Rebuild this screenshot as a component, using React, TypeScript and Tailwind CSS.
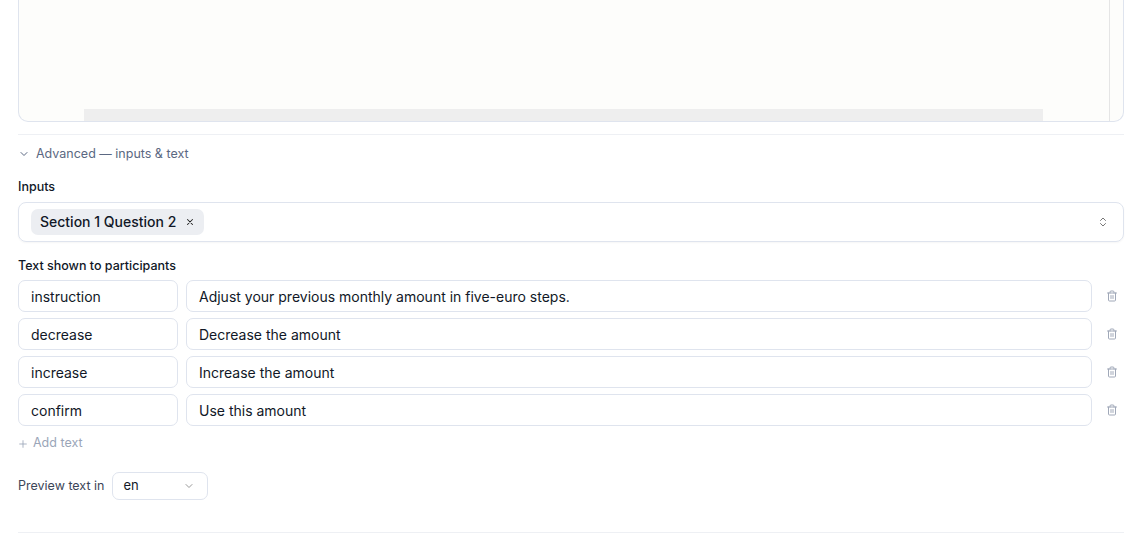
import React from "react";

const rows = [
  ["instruction", "Adjust your previous monthly amount in five-euro steps."],
  ["decrease", "Decrease the amount"],
  ["increase", "Increase the amount"],
  ["confirm", "Use this amount"],
];

function Trash() {
  return (
    <svg width="12" height="12" viewBox="0 0 24 24" fill="none" stroke="#a0a8b8" strokeWidth="2" strokeLinecap="round" strokeLinejoin="round">
      <path d="M3 6h18" />
      <path d="M19 6v14a2 2 0 0 1-2 2H7a2 2 0 0 1-2-2V6" />
      <path d="M8 6V4a2 2 0 0 1 2-2h4a2 2 0 0 1 2 2v2" />
      <path d="M10 11v6M14 11v6" />
    </svg>
  );
}

export default function App() {
  return (
    <div className="w-[1142px] h-[533px] overflow-hidden bg-white px-[18px] text-[#111827]" style={{ fontFamily: "Inter, 'Noto Sans', sans-serif" }}>
      <div className="h-[122px] border border-t-0 border-[#dfe4ee] rounded-b-[10px] bg-[#fdfdfb] relative flex">
        <div className="flex-1 flex flex-col justify-end">
          <div className="h-[12px] ml-[65px] mr-[66px] bg-[#eeeeee]" />
        </div>
        <div className="w-[14px] border-l border-[#e5e5e5]" />
      </div>
      <div className="mt-[12px] border-t border-[#eef0f4]" />
      <div className="mt-[10px] flex items-center gap-[6px] text-[12.5px] text-[#5b6882]">
        <svg width="12" height="12" viewBox="0 0 24 24" fill="none" stroke="#5b6882" strokeWidth="2" strokeLinecap="round"><path d="m6 9 6 6 6-6" /></svg>
        Advanced — inputs &amp; text
      </div>
      <div className="mt-[14px] text-[12.5px] font-medium">Inputs</div>
      <div className="mt-[5px] h-[40px] border border-[#dfe4ee] rounded-[8px] flex items-center pl-[12px] pr-[14px] shadow-[0_1px_2px_rgba(0,0,0,0.04)]">
        <div className="h-[26px] rounded-[7px] bg-[#eceef2] flex items-center px-[9px] gap-[9px] text-[14px] font-medium">
          Section 1 Question 2
          <svg width="10" height="10" viewBox="0 0 24 24" fill="none" stroke="#222" strokeWidth="2.5" strokeLinecap="round"><path d="M6 6l12 12M18 6 6 18" /></svg>
        </div>
        <div className="flex-1" />
        <svg width="12" height="14" viewBox="0 0 24 24" fill="none" stroke="#777" strokeWidth="2" strokeLinecap="round" strokeLinejoin="round"><path d="m7 9 5-5 5 5M7 15l5 5 5-5" /></svg>
      </div>
      <div className="mt-[15px] text-[12.5px] font-medium">Text shown to participants</div>
      <div className="mt-[5px] flex flex-col gap-[6px]">
        {rows.map(([k, v]) => (
          <div key={k} className="flex items-center gap-[8px]">
            <div className="w-[160px] h-[32px] border border-[#dfe4ee] rounded-[7px] flex items-center px-[12px] text-[14px]">{k}</div>
            <div className="flex-1 h-[32px] border border-[#dfe4ee] rounded-[7px] flex items-center px-[12px] text-[14px]">{v}</div>
            <div className="w-[24px] flex justify-end pr-[6px]"><Trash /></div>
          </div>
        ))}
      </div>
      <div className="mt-[8px] flex items-center gap-[5px] text-[12.5px] text-[#9aa5b8]">
        <svg width="10" height="10" viewBox="0 0 24 24" fill="none" stroke="#9aa5b8" strokeWidth="2" strokeLinecap="round"><path d="M12 4v16M4 12h16" /></svg>
        Add text
      </div>
      <div className="mt-[19px] flex items-center gap-[8px]">
        <span className="text-[12.5px] text-[#3c4658]">Preview text in</span>
        <div className="w-[96px] h-[28px] border border-[#dfe4ee] rounded-[7px] flex items-center justify-between pl-[10px] pr-[12px] text-[13px]">
          en
          <svg width="12" height="12" viewBox="0 0 24 24" fill="none" stroke="#999" strokeWidth="2" strokeLinecap="round"><path d="m6 9 6 6 6-6" /></svg>
        </div>
      </div>
      <div className="mt-[32px] border-t border-[#eef0f4]" />
    </div>
  );
}
